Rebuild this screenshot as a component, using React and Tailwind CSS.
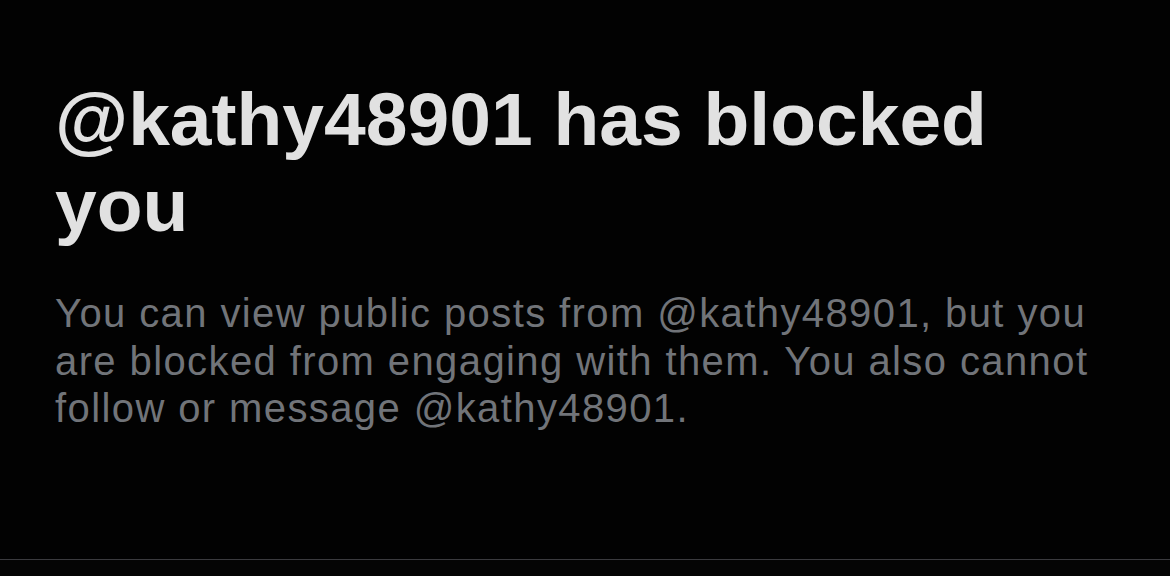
export default function App() {
    return (
        <div className="w-[1170px] h-[576px] bg-[#020202] flex flex-col overflow-hidden">
            <div className="h-[559px] px-[55px] pt-[76px]">
                <h1 className="w-[1000px] text-[75px] leading-[86px] font-bold text-[#e1e1e1] font-['Liberation_Sans',Arial,sans-serif]">
                    @kathy48901 has blocked you
                </h1>
                <p className="mt-[42px] text-[40px] leading-[47.5px] text-[#717479] font-['Liberation_Sans',Arial,sans-serif] tracking-[0.035em] w-[1070px]">
                    You can view public posts from @kathy48901, but you are blocked from engaging with them. You also cannot follow or message @kathy48901.
                </p>
            </div>
            <div className="border-t border-[#3a3a3e] flex-1 bg-[#050505]"></div>
        </div>
    )
}
